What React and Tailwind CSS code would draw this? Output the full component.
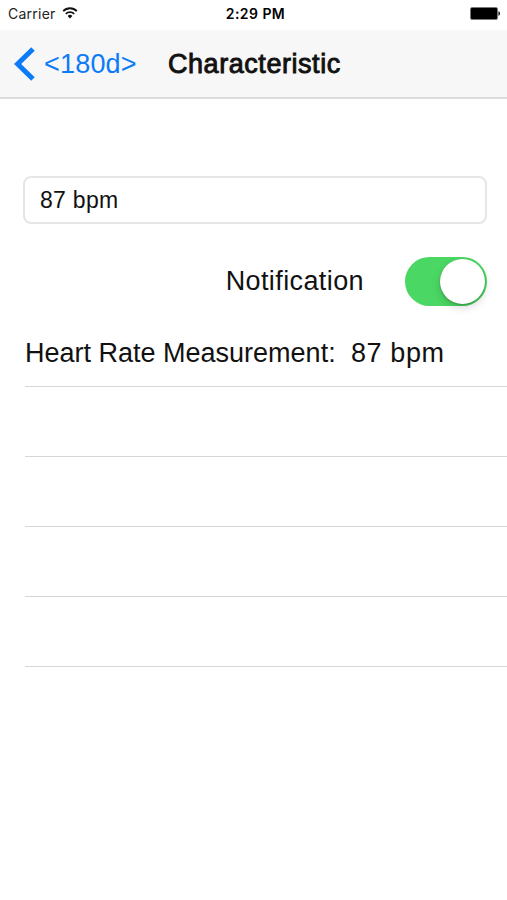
import React, { useState } from "react";

const readings = [
  { label: "Heart Rate Measurement:", value: "87 bpm" },
  null,
  null,
  null,
  null,
];

function WifiIcon() {
  return (
    <svg width="16" height="12" viewBox="0 0 16 12" fill="none">
      <path d="M1.2 4.1a9.6 9.6 0 0 1 13.6 0" stroke="#111" strokeWidth="1.9" />
      <path d="M3.8 6.9a6 6 0 0 1 8.4 0" stroke="#111" strokeWidth="1.8" />
      <path d="M8 11.4 5.6 8.9a3.4 3.4 0 0 1 4.8 0z" fill="#111" />
    </svg>
  );
}

function BatteryIcon() {
  return (
    <svg width="31" height="13" viewBox="0 0 31 13">
      <rect x="0.5" y="0.5" width="27" height="12" rx="1.5" fill="#000" stroke="#777" strokeWidth="0.8" />
      <path d="M28.4 4.3c1 .3 1.7 1.1 1.7 2.2s-.7 1.9-1.7 2.2z" fill="#222" />
    </svg>
  );
}

function StatusBar() {
  return (
    <div className="grid h-[30px] grid-cols-3 items-center pb-[4px] pl-[8px] pr-[6px] font-['Inter',sans-serif] text-[14px] text-[#222]">
      <div className="flex items-center gap-[6px]">
        <span className="tracking-[0.25px]">Carrier</span>
        <WifiIcon />
      </div>
      <span className="pl-[2px] text-center font-semibold tracking-[0.45px] text-black">
        2:29 PM
      </span>
      <div className="flex justify-end">
        <BatteryIcon />
      </div>
    </div>
  );
}

function NavBar() {
  return (
    <header className="flex h-[69px] items-center border-b-2 border-[#dcdcdc] bg-[#f7f7f7] pl-[14px]">
      <button className="flex w-[154px] items-center gap-[9px] text-[#0b7bf7]">
        <svg width="21" height="34" viewBox="0 0 21 34" fill="none">
          <path d="M19 2 3.6 17 19 32" stroke="currentColor" strokeWidth="5" />
        </svg>
        <span className="text-[27px] leading-[32px] tracking-[0.2px]">
          &lt;180d&gt;
        </span>
      </button>
      <h1 className="text-[27px] leading-[32px] tracking-[0.55px] [-webkit-text-stroke:0.9px_#111]">
        Characteristic
      </h1>
    </header>
  );
}

function Switch({ checked, onChange }) {
  return (
    <button
      role="switch"
      aria-checked={checked}
      aria-label="Notification"
      onClick={onChange}
      className={`flex h-[49px] w-[82px] items-center rounded-full px-[2px] ${
        checked ? "justify-end bg-[#4bd763]" : "justify-start bg-[#e5e5e5]"
      }`}
    >
      <span className="size-[45px] rounded-full bg-white shadow-[0_4px_8px_rgba(0,0,0,0.15),0_1px_2px_rgba(0,0,0,0.25)]" />
    </button>
  );
}

function App() {
  const [notify, setNotify] = useState(true);

  return (
    <div className="min-h-[900px] w-full bg-white font-['Liberation_Sans',Arial,sans-serif] text-[#111]">
      <StatusBar />
      <NavBar />

      <main className="pt-[77px]">
        <div className="ml-[23px] mr-[20px] flex h-[48px] items-center rounded-[8px] border-2 border-[#e6e6e6] pl-[15px] text-[23px] tracking-[0.3px]">
          87 bpm
        </div>

        <div className="mt-[33px] flex items-center justify-end gap-[41px] pr-[20px]">
          <span className="text-[27px] tracking-[0.4px]">Notification</span>
          <Switch checked={notify} onChange={() => setNotify(!notify)} />
        </div>

        <ul className="mt-[11px] pl-[25px]">
          {readings.map((reading, index) => (
            <li
              key={index}
              className="flex h-[70px] items-center border-b border-[#d6d6d6] pt-[3px] text-[27px]"
            >
              {reading && (
                <>
                  <span className="w-[326px]">{reading.label}</span>
                  <span className="tracking-[0.6px]">{reading.value}</span>
                </>
              )}
            </li>
          ))}
        </ul>
      </main>
    </div>
  );
}

export default App;
